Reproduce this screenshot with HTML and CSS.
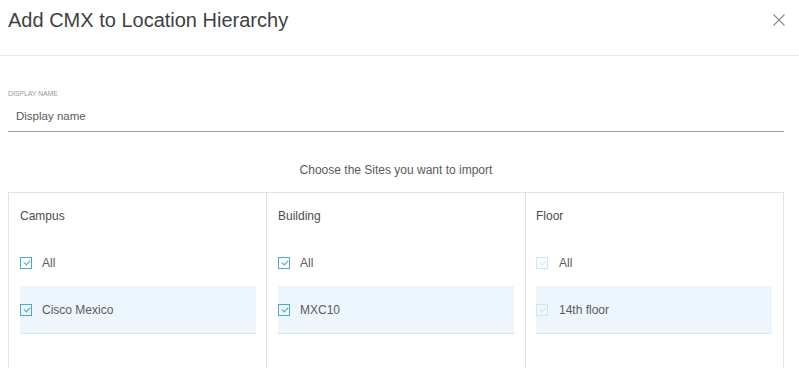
FILE: index.html
```html
<!DOCTYPE html>
<html>
<head>
<meta charset="utf-8">
<link rel="stylesheet" href="styles.css">
</head>
<body>
<div class="modal">
  <div class="header">
    <h1 class="title">Add CMX to Location Hierarchy</h1>
    <span class="close" aria-label="close">
      <svg width="12" height="12" viewBox="0 0 12 12"><path d="M0.5 0.5 L11.5 11.5 M11.5 0.5 L0.5 11.5" stroke="#8a8a8a" stroke-width="1.1" fill="none"/></svg>
    </span>
  </div>
  <div class="body">
    <div class="field">
      <div class="label">DISPLAY NAME</div>
      <div class="input">Display name</div>
    </div>
    <div class="prompt">Choose the Sites you want to import</div>
    <div class="table">
      <div class="col">
        <div class="col-head">Campus</div>
        <div class="row"><span class="cb"></span><span>All</span></div>
        <div class="row sel"><span class="cb"></span><span>Cisco Mexico</span></div>
      </div>
      <div class="col">
        <div class="col-head">Building</div>
        <div class="row"><span class="cb"></span><span>All</span></div>
        <div class="row sel"><span class="cb"></span><span>MXC10</span></div>
      </div>
      <div class="col">
        <div class="col-head">Floor</div>
        <div class="row"><span class="cb dis"></span><span>All</span></div>
        <div class="row sel"><span class="cb dis"></span><span>14th floor</span></div>
      </div>
    </div>
  </div>
</div>
</body>
</html>
```
FILE: styles.css
```css
html, body {
  margin: 0;
  padding: 0;
  background: #fff;
}
body {
  font-family: "Liberation Sans", Arial, sans-serif;
  color: #5a5a5d;
}
.header {
  height: 56px;
  box-sizing: border-box;
  border-bottom: 1px solid #e8e8e8;
  display: flex;
  justify-content: space-between;
  align-items: flex-start;
  padding: 0 14px 0 8px;
}
.title {
  margin: 8px 0 0;
  font-size: 20px;
  font-weight: normal;
  color: #3f3f42;
  line-height: 24px;
}
.close {
  margin-top: 14px;
  display: block;
  width: 12px;
  height: 12px;
}
.close svg { display: block; }
.body {
  padding: 0 15px 0 8px;
}
.field {
  padding-top: 33px;
}
.label {
  font-size: 7px;
  letter-spacing: -0.1px;
  color: #9a9a9a;
  line-height: 10px;
}
.input {
  margin-top: 10px;
  padding: 0 0 8px 8px;
  font-size: 11.5px;
  color: #5a5a5a;
  line-height: 14px;
  border-bottom: 1px solid #9c9c9c;
}
.prompt {
  margin-top: 31px;
  text-align: center;
  font-size: 12px;
  color: #5a5a5d;
  line-height: 14px;
}
.table {
  margin-top: 15px;
  display: grid;
  grid-template-columns: 257px 259px 1fr;
  border: 1px solid #e2e2e2;
  border-bottom: none;
  height: 176px;
}
.col {
  padding: 0 11px 0 11px;
}
.col:first-child {
  padding-right: 10px;
}
.col:last-child {
  padding-left: 10px;
}
.col + .col {
  border-left: 1px solid #e2e2e2;
}
.col-head {
  margin-top: 16px;
  font-size: 12px;
  line-height: 14px;
  color: #4d4d50;
  height: 14px;
}
.row {
  display: flex;
  align-items: center;
  height: 47px;
  font-size: 12px;
  color: #5a5a5d;
}
.col-head + .row {
  margin-top: 16px;
}
.row.sel {
  background: #edf6fd;
  border-bottom: 1px solid #dfe6ec;
}
.cb {
  width: 10px;
  height: 10px;
  border: 1px solid #49a9cf;
  margin: 0 10px 0 0;
  position: relative;
  flex: none;
}
.col:last-child .cb {
  margin-right: 11px;
}
.cb::after {
  content: "";
  position: absolute;
  left: 2.5px;
  top: 2px;
  width: 5px;
  height: 3px;
  border-left: 1px solid #49a9cf;
  border-bottom: 1px solid #49a9cf;
  transform: rotate(-45deg);
}
.cb.dis {
  border-color: #cfe6ef;
}
.cb.dis::after {
  border-color: #cfe6ef;
}
```
